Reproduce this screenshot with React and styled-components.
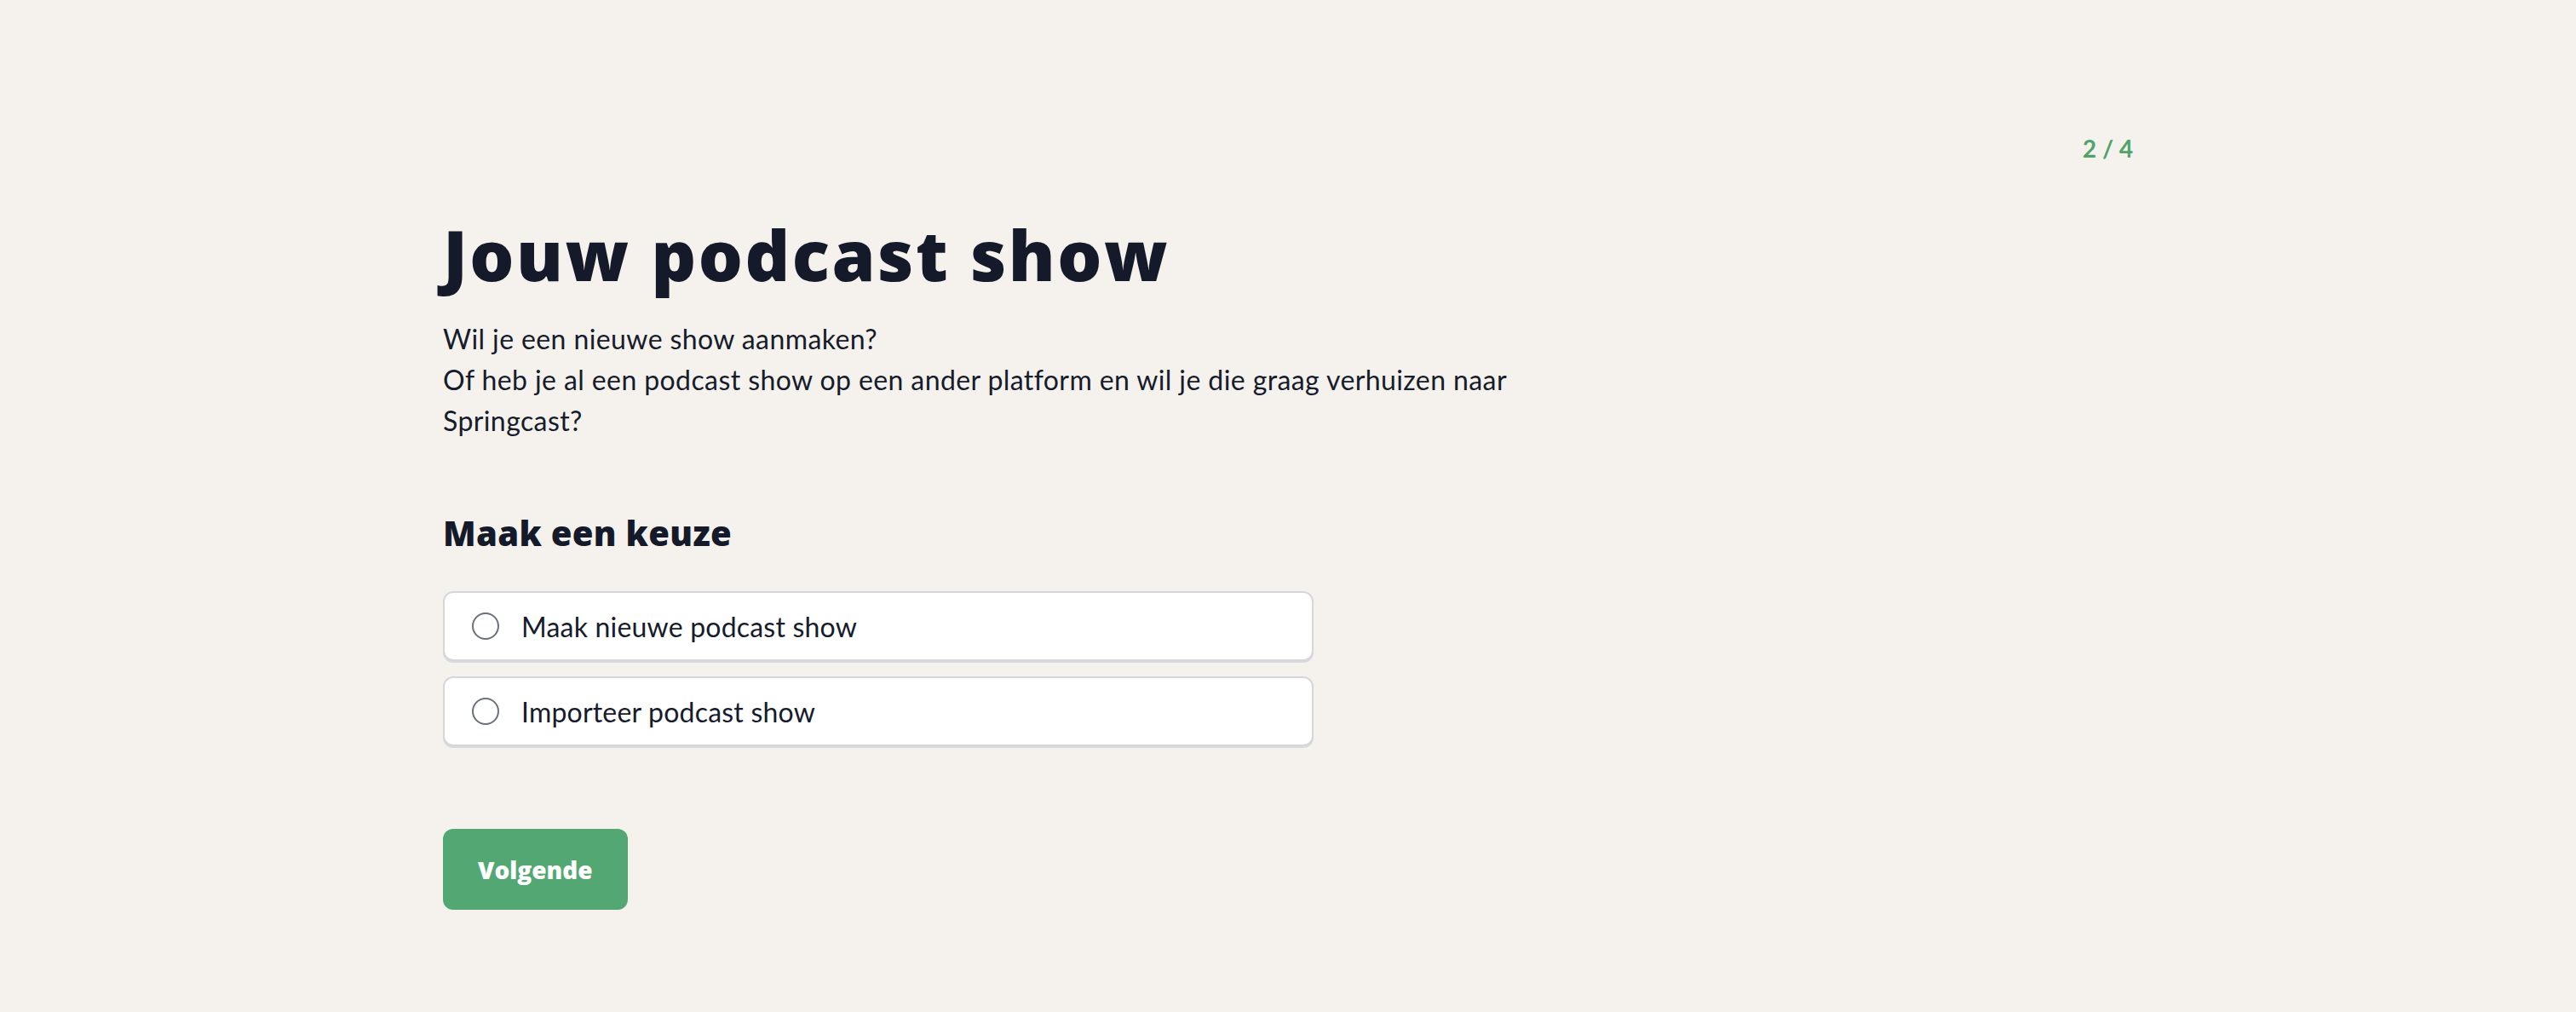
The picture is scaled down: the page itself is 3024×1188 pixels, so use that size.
import React, { useState } from "react";
import styled, { createGlobalStyle } from "styled-components";

const Global = createGlobalStyle`
  html, body { margin: 0; padding: 0; background: #f5f2ed; }
  body { font-family: "Lato", "Noto Sans", sans-serif; color: #161c2b; }
  * { box-sizing: border-box; }
`;

const Page = styled.div`
  min-height: 1188px;
  background: #f5f2ed;
`;

const Container = styled.div`
  width: 1984px;
  margin: 0 auto;
  padding-top: 154px;
`;

const TopBar = styled.div`
  display: flex;
  justify-content: flex-end;
`;

const Step = styled.span`
  font-family: "Lato", sans-serif;
  font-weight: 700;
  font-size: 28px;
  line-height: 40px;
  color: #4fa36b;
`;

const Content = styled.div`
  display: flex;
  flex-direction: column;
  align-items: flex-start;
`;

const Title = styled.h1`
  margin: 54px 0 0;
  font-family: "Open Sans", sans-serif;
  font-weight: 800;
  font-size: 82px;
  line-height: 100px;
  letter-spacing: 2.5px;
  color: #141a29;
`;

const Intro = styled.p`
  margin: 26px 0 0;
  max-width: 1300px;
  font-size: 32px;
  line-height: 48px;
  letter-spacing: 0.4px;
  color: #161c2b;
`;

const SubHeading = styled.h2`
  margin: 80px 0 0;
  font-family: "Open Sans", sans-serif;
  font-weight: 800;
  font-size: 40px;
  line-height: 56px;
  letter-spacing: 0.3px;
  color: #141a29;
`;

const Options = styled.div`
  margin-top: 40px;
  width: 1022px;
  display: grid;
  gap: 18px;
`;

const Option = styled.label`
  display: flex;
  align-items: center;
  gap: 26px;
  height: 82px;
  padding: 0 32px;
  background: #ffffff;
  border: 2px solid #d6d6db;
  border-radius: 12px;
  box-shadow: 0 2px 0 #d9d9de;
  cursor: pointer;
  font-size: 32px;
  letter-spacing: 0.2px;
  color: #161c2b;
`;

const Radio = styled.span`
  width: 32px;
  height: 32px;
  flex: none;
  border-radius: 50%;
  border: 2.5px solid ${(p) => (p.$checked ? "#53a772" : "#6b6f7e")};
  background: ${(p) => (p.$checked ? "radial-gradient(#53a772 0 7px, #fff 8px)" : "#fff")};
`;

const HiddenInput = styled.input`
  position: absolute;
  opacity: 0;
  pointer-events: none;
`;

const Button = styled.button`
  margin-top: 97px;
  height: 95px;
  padding: 0 41px;
  border: none;
  border-radius: 12px;
  background: #53a772;
  color: #ffffff;
  font-family: "Open Sans", sans-serif;
  font-weight: 800;
  font-size: 28px;
  cursor: pointer;
`;

const options = ["Maak nieuwe podcast show", "Importeer podcast show"];

export default function App() {
  const [choice, setChoice] = useState(null);
  return (
    <Page>
      <Global />
      <Container>
        <TopBar>
          <Step>2 / 4</Step>
        </TopBar>
        <Content>
          <Title>Jouw podcast show</Title>
          <Intro>
            Wil je een nieuwe show aanmaken?
            <br />
            Of heb je al een podcast show op een ander platform en wil je die graag verhuizen naar Springcast?
          </Intro>
          <SubHeading>Maak een keuze</SubHeading>
          <Options>
            {options.map((o, i) => (
              <Option key={o}>
                <HiddenInput type="radio" name="show" checked={choice === i} onChange={() => setChoice(i)} />
                <Radio $checked={choice === i} />
                {o}
              </Option>
            ))}
          </Options>
          <Button>Volgende</Button>
        </Content>
      </Container>
    </Page>
  );
}
